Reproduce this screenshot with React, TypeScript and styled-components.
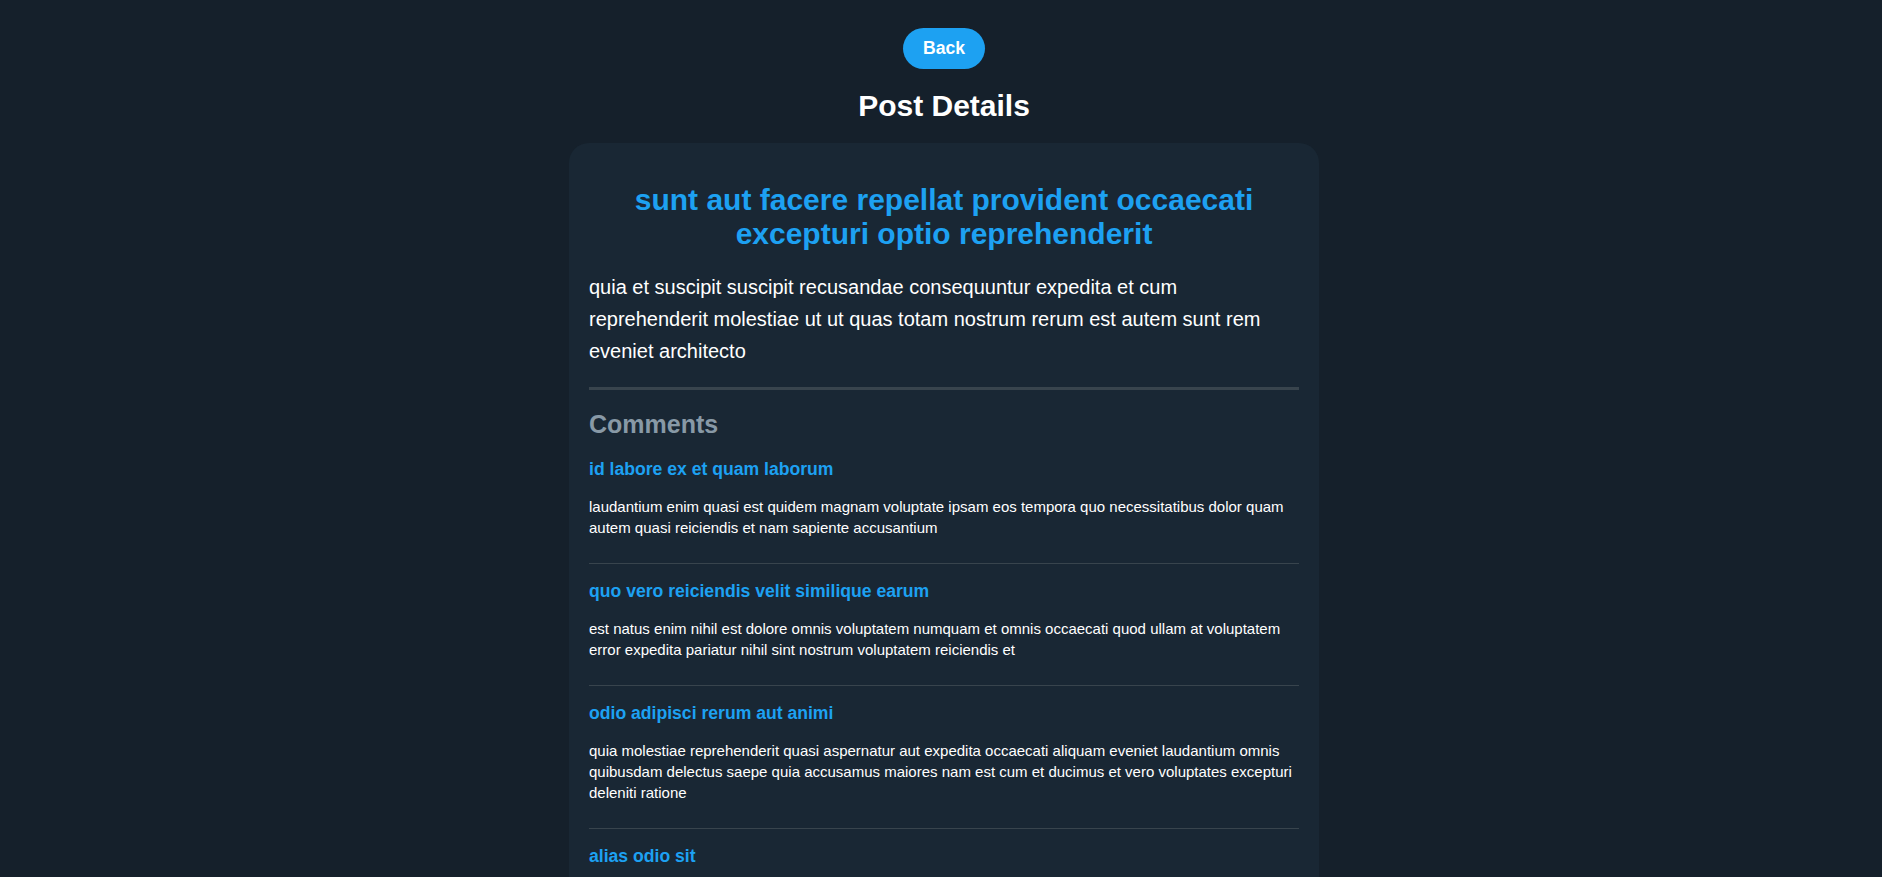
import styled, { createGlobalStyle } from 'styled-components';

type Comment = {
  id: number;
  name: string;
  body: string;
};

const post = {
  title: 'sunt aut facere repellat provident occaecati excepturi optio reprehenderit',
  body: 'quia et suscipit suscipit recusandae consequuntur expedita et cum reprehenderit molestiae ut ut quas totam nostrum rerum est autem sunt rem eveniet architecto',
};

const comments: Comment[] = [
  {
    id: 1,
    name: 'id labore ex et quam laborum',
    body: 'laudantium enim quasi est quidem magnam voluptate ipsam eos tempora quo necessitatibus dolor quam autem quasi reiciendis et nam sapiente accusantium',
  },
  {
    id: 2,
    name: 'quo vero reiciendis velit similique earum',
    body: 'est natus enim nihil est dolore omnis voluptatem numquam et omnis occaecati quod ullam at voluptatem error expedita pariatur nihil sint nostrum voluptatem reiciendis et',
  },
  {
    id: 3,
    name: 'odio adipisci rerum aut animi',
    body: 'quia molestiae reprehenderit quasi aspernatur aut expedita occaecati aliquam eveniet laudantium omnis quibusdam delectus saepe quia accusamus maiores nam est cum et ducimus et vero voluptates excepturi deleniti ratione',
  },
  {
    id: 4,
    name: 'alias odio sit',
    body: 'non et atque occaecati deserunt quas accusantium unde odit nobis qui voluptatem quia voluptas consequuntur itaque dolor et qui rerum deleniti ut occaecati',
  },
  {
    id: 5,
    name: 'vero eaque aliquid doloribus et culpa',
    body: 'harum non quasi et ratione tempore iure ex voluptates in ratione harum architecto fugit inventore cupiditate voluptates magni quo et',
  },
];

export default function App() {
  return (
    <>
      <GlobalStyle />
      <Page>
        <BackButton type="button">Back</BackButton>
        <PageTitle>Post Details</PageTitle>
        <Card>
          <PostSection>
            <PostTitle>{post.title}</PostTitle>
            <PostBody>{post.body}</PostBody>
          </PostSection>

          <CommentsHeading>Comments</CommentsHeading>
          <CommentList>
            {comments.map((comment) => (
              <CommentItem key={comment.id}>
                <CommentName>{comment.name}</CommentName>
                <CommentBody>{comment.body}</CommentBody>
              </CommentItem>
            ))}
          </CommentList>
        </Card>
      </Page>
    </>
  );
}

const GlobalStyle = createGlobalStyle`
  html, body {
    margin: 0;
    padding: 0;
    background-color: #15202b;
  }
  body {
    font-family: 'Liberation Sans', Arial, sans-serif;
    color: #ffffff;
  }
  * {
    box-sizing: border-box;
  }
`;

const Page = styled.div`
  min-height: 100vh;
  background-color: #15202b;
  padding: 28px 0 40px 6px;
  display: flex;
  flex-direction: column;
  align-items: center;
`;

const BackButton = styled.button`
  font-family: inherit;
  font-size: 17.6px;
  font-weight: 700;
  line-height: normal;
  color: #ffffff;
  background-color: #1da1f2;
  border: none;
  border-radius: 100vh;
  padding: 10px 20px;
  cursor: pointer;
`;

const PageTitle = styled.h1`
  margin: 20px 0;
  font-size: 30px;
  font-weight: 700;
  line-height: normal;
  color: #ffffff;
`;

const Card = styled.div`
  width: 750px;
  background-color: #192734;
  border-radius: 20px;
  padding: 20px;
`;

const PostSection = styled.div`
  padding-bottom: 20px;
  border-bottom: 3px solid #38444d;
`;

const PostTitle = styled.h2`
  margin: 20px 0;
  font-size: 30px;
  font-weight: 700;
  line-height: normal;
  text-align: center;
  color: #1da1f2;
`;

const PostBody = styled.p`
  margin: 0;
  font-size: 20px;
  line-height: 32px;
  color: #ffffff;
`;

const CommentsHeading = styled.h3`
  margin: 20px 0 3px;
  font-size: 25px;
  font-weight: 700;
  line-height: normal;
  color: #8899a6;
`;

const CommentList = styled.div`
  display: flex;
  flex-direction: column;
`;

const CommentItem = styled.div`
  padding: 17px 0 24px;
  border-bottom: 1px solid #38444d;
`;

const CommentName = styled.h4`
  margin: 0 0 16px;
  font-size: 17.6px;
  font-weight: 700;
  line-height: normal;
  color: #1da1f2;
`;

const CommentBody = styled.p`
  margin: 0;
  font-size: 15px;
  line-height: 21.4px;
  color: #ffffff;
`;
